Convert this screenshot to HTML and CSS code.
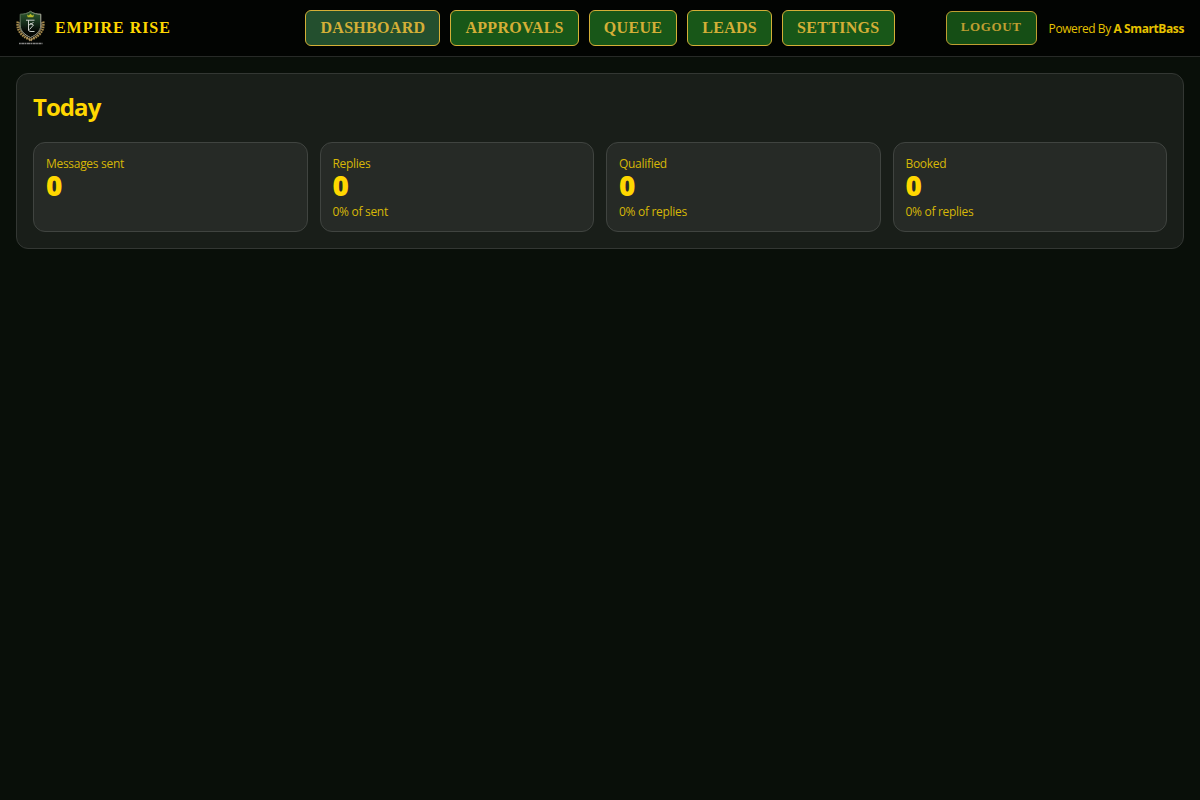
FILE: index.html
```html
<!DOCTYPE html>
<html lang="en">
<head>
<meta charset="utf-8">
<title>Empire Rise</title>
<link rel="stylesheet" href="styles.css">
</head>
<body>
<header class="topbar">
  <div class="brand">
    <svg class="logo" viewBox="0 0 30 36" aria-hidden="true">
      <defs>
        <linearGradient id="shield" x1="0" y1="0" x2="0" y2="1">
          <stop offset="0" stop-color="#2f5b2f"/>
          <stop offset=".4" stop-color="#18331e"/>
          <stop offset=".75" stop-color="#050805"/>
        </linearGradient>
        <linearGradient id="rim" x1="0" y1="0" x2="1" y2="1">
          <stop offset="0" stop-color="#466044"/>
          <stop offset=".6" stop-color="#b8b8a8"/>
          <stop offset="1" stop-color="#777765"/>
        </linearGradient>
      </defs>
      <g fill="none" stroke="#a58a4c" stroke-width="2.4" stroke-dasharray="1.7 .8">
        <path d="M1.800 11.500C.5 19 4 26 14 29.500"/>
        <path d="M27.200 11.500C28.500 19 25 26 15 29.500"/>
      </g>
      <path d="M3.200 12C2.500 19 6 25 16 31M25.800 12C26.500 19 23 25 13 31" fill="none" stroke="#c0a471" stroke-width=".8"/>
      <path d="M14.500 1.300C11.500 3.500 8 4.200 4.200 4.200V15C4.200 21.500 9.500 25.300 14.500 27.500C19.500 25.300 24.800 21.500 24.800 15V4.200C21 4.200 17.500 3.500 14.500 1.300Z" fill="url(#shield)" stroke="url(#rim)" stroke-width="1"/>
      <path d="M11 4.500L12.700 5.600L14.500 3.800L16.300 5.600L18 4.500L17.300 7.300H11.700Z" fill="#b5b829"/>
      <path d="M10 10.200H18.500M12.500 10V20Q12.500 21.500 15 21.500H18.500M12 15.500L17.500 12.500M14 13.500L17.500 15L13.500 19.500" fill="none" stroke="#c9cec8" stroke-width="1"/>
      <path d="M3 33.500H26.500" stroke="#858585" stroke-width="1.300" stroke-dasharray="1.800 .5 3 .4"/>
    </svg>
    <span class="brand-name">EMPIRE RISE</span>
  </div>
  <nav class="nav">
    <a class="nav-link active">DASHBOARD</a>
    <a class="nav-link">APPROVALS</a>
    <a class="nav-link">QUEUE</a>
    <a class="nav-link">LEADS</a>
    <a class="nav-link">SETTINGS</a>
  </nav>
  <div class="account">
    <button class="logout">LOGOUT</button>
    <div class="powered">Powered By <strong>A SmartBass</strong></div>
  </div>
</header>
<main class="page">
  <section class="panel">
    <h2 class="title">Today</h2>
    <div class="stats">
      <div class="card"><div class="label">Messages sent</div><div class="value">0</div></div>
      <div class="card"><div class="label">Replies</div><div class="value">0</div><div class="label">0% of sent</div></div>
      <div class="card"><div class="label">Qualified</div><div class="value">0</div><div class="label">0% of replies</div></div>
      <div class="card"><div class="label">Booked</div><div class="value">0</div><div class="label">0% of replies</div></div>
    </div>
  </section>
</main>
</body>
</html>
```
FILE: styles.css
```css
* { box-sizing: border-box; }
body {
  margin: 0;
  min-height: 100vh;
  background: #090f09;
  color: #ffd700;
  font-family: "Segoe UI", "Open Sans", sans-serif;
}
.topbar {
  display: grid;
  grid-template-columns: 1fr auto 1fr;
  align-items: center;
  height: 57px;
  padding: 0 16px;
  background: #020402;
  border-bottom: 1px solid #272a27;
}
.brand { display: flex; align-items: center; gap: 9px; }
.logo { width: 30px; height: 36px; }
.brand-name {
  font: 700 16px/18px "Times New Roman", "Liberation Serif", serif;
  letter-spacing: .95px;
}
.nav { display: flex; gap: 10px; }
.nav-link, .logout {
  border: 1px solid #d4af37;
  border-radius: 6px;
  background: #185718;
  color: #d4af37;
  font: 700 16px/18px "Times New Roman", "Liberation Serif", serif;
  letter-spacing: .3px;
  padding: 8px 14px;
}
.nav-link.active { background: #234f2e; }
.account { display: flex; align-items: center; justify-content: flex-end; gap: 12px; }
.logout {
  height: 34px;
  padding: 6px 14px 8px;
  font-size: 13px;
  letter-spacing: .65px;
  opacity: .9;
}
.powered {
  padding-top: 2px;
  font-size: 12px;
  line-height: 16px;
  letter-spacing: -.42px;
  opacity: .9;
  white-space: nowrap;
}
.powered strong { letter-spacing: -.4px; }
.page { padding: 16px; }
.panel {
  height: 176px;
  padding: 16px;
  border: 1px solid #333733;
  border-radius: 12px;
  background: #191e19;
}
.title {
  margin: 0 0 16px;
  height: 36px;
  font-size: 24px;
  line-height: 34px;
  letter-spacing: -.95px;
}
.stats { display: grid; grid-template-columns: repeat(4, 1fr); gap: 12px; }
.card {
  height: 90px;
  padding: 13px 12px 11px;
  border: 1px solid #404440;
  border-radius: 12px;
  background: #262a26;
}
.label { font-size: 12px; line-height: 16px; letter-spacing: -.3px; color: #d6b706; }
.value { height: 32px; font-size: 28px; line-height: 27px; font-weight: 800; }
```
